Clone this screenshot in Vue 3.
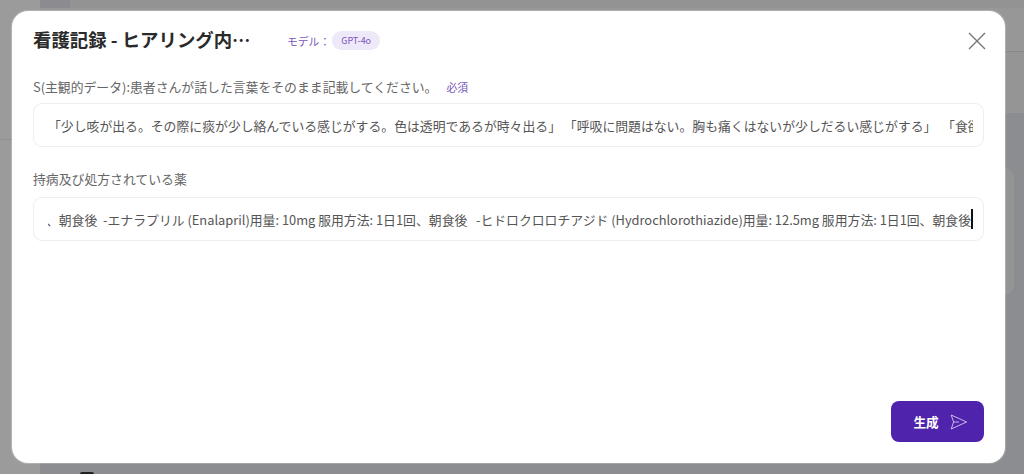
<script setup>
const texto1 = "「少し咳が出る。その際に痰が少し絡んでいる感じがする。色は透明であるが時々出る」 「呼吸に問題はない。胸も痛くはないが少しだるい感じがする」  「食欲はあります」";
const texto2 = "、朝食後  -エナラプリル (Enalapril)用量: 10mg 服用方法: 1日1回、朝食後   -ヒドロクロロチアジド (Hydrochlorothiazide)用量: 12.5mg 服用方法: 1日1回、朝食後";
</script>

<template>
  <div class="fundo">
    <aside class="lateral">
      <div class="lateral-linha"></div>
    </aside>
    <div class="principal">
      <div class="topo">
        <div class="topo-aba"><span class="aba-ativa"></span></div>
        <div class="topo-barra"></div>
      </div>
      <div class="corpo">
        <div class="cartao"></div>
      </div>
      <div class="rodape-fundo"><span class="avatar"></span></div>
    </div>
    <section class="modal">
      <header class="cabecalho">
        <h2 class="titulo">看護記録 - ヒアリング内…</h2>
        <span class="modelo">モデル：</span>
        <span class="etiqueta">GPT-4o</span>
        <svg class="fechar" width="18" height="18" viewBox="0 0 18 18">
          <path d="M1 1L17 17M17 1L1 17" stroke="#777" stroke-width="1.4" fill="none" />
        </svg>
      </header>
      <div class="campo">
        <label class="rotulo">S(主観的データ):患者さんが話した言葉をそのまま記載してください。<span class="obrigatorio">必須</span></label>
        <div class="entrada"><div class="recorte"><span class="valor">{{ texto1 }}</span></div></div>
      </div>
      <div class="campo segundo">
        <label class="rotulo">持病及び処方されている薬</label>
        <div class="entrada"><div class="recorte fim"><span class="valor">{{ texto2 }}</span><i class="cursor"></i></div></div>
      </div>
      <footer class="rodape">
        <button class="gerar">
          生成
          <svg width="18" height="16" viewBox="0 0 18 16" fill="none">
            <path d="M1.2 1L16.6 8L1.2 15L3.6 8ZM3.6 8H9" stroke="#d8caf0" stroke-width="0.9" stroke-linejoin="round" />
          </svg>
        </button>
      </footer>
    </section>
  </div>
</template>

<style>
body {
  margin: 0;
  overflow: hidden;
}
</style>

<style scoped>
.fundo {
  position: relative;
  display: flex;
  width: 1024px;
  height: 474px;
  overflow: hidden;
  background: #8c8d91;
  font-family: "Noto Sans CJK JP", "Noto Sans", sans-serif;
}

.lateral {
  width: 40px;
  flex-shrink: 0;
  background: #9b9b9b;
}

.lateral-linha {
  height: 140px;
  border-bottom: 1px solid #8f8f8f;
  box-sizing: border-box;
}

.principal {
  flex: 1;
  display: flex;
  flex-direction: column;
}

.topo {
  display: flex;
  flex-direction: column;
  height: 113px;
  flex-shrink: 0;
  background: #959595;
}

.topo-aba {
  display: flex;
  height: 8px;
  background: #939394;
}

.aba-ativa {
  width: 30px;
  background: #8c8c90;
}

.topo-barra {
  height: 43px;
  background: #979797;
  border-bottom: 1px solid #888889;
}

.corpo {
  flex: 1;
  display: flex;
  flex-direction: column;
  align-items: flex-end;
}

.cartao {
  width: 30px;
  height: 127px;
  margin: 55px 10px 0 0;
  border-radius: 10px;
  background: #949494;
}

.rodape-fundo {
  height: 2px;
  padding-left: 40px;
}

.avatar {
  display: block;
  width: 14px;
  height: 2px;
  border-radius: 7px 7px 0 0;
  background: #222;
}

.modal {
  position: absolute;
  top: 11px;
  left: 12px;
  width: 993px;
  height: 452px;
  box-sizing: border-box;
  display: flex;
  flex-direction: column;
  padding: 0 21px 21px;
  border-radius: 16px;
  background: #fff;
  box-shadow: 0 0 1px 1px rgba(255, 255, 255, 0.25);
}

.cabecalho {
  display: flex;
  align-items: center;
  height: 59px;
  flex-shrink: 0;
}

.titulo {
  margin: -3px 0 0;
  width: 254px;
  font-size: 18.4px;
  font-weight: 700;
  color: #2a2a2a;
  white-space: nowrap;
}

.modelo {
  font-size: 10.8px;
  color: #7a55bd;
}

.etiqueta {
  margin-left: 2px;
  padding: 0 9px;
  height: 19px;
  line-height: 19px;
  border-radius: 10px;
  background: #eee9f8;
  font-size: 9px;
  color: #7a55bd;
}

.fechar {
  margin-left: auto;
  margin-right: -2px;
}

.campo {
  display: flex;
  flex-direction: column;
}

.segundo {
  margin-top: 15px;
}

.rotulo {
  height: 33px;
  line-height: 33px;
  font-size: 12.85px;
  color: #666;
}

.segundo .rotulo {
  height: 35px;
}

.obrigatorio {
  margin-left: 9px;
  font-size: 10.8px;
  color: #7a55bd;
}

.entrada {
  display: flex;
  align-items: center;
  height: 44px;
  box-sizing: border-box;
  padding: 0 10px 0 14px;
  border: 1px solid #eeeeee;
  border-radius: 9px;
  font-size: 12.85px;
  color: #555;
}

.recorte {
  flex: 1;
  display: flex;
  align-items: center;
  min-width: 0;
  overflow: hidden;
  white-space: pre;
}

.fim {
  justify-content: flex-end;
}

.valor {
  flex-shrink: 0;
}

.cursor {
  flex-shrink: 0;
  width: 2px;
  height: 20px;
  background: #111;
}

.rodape {
  display: flex;
  justify-content: flex-end;
  margin-top: auto;
}

.gerar {
  display: flex;
  align-items: center;
  justify-content: center;
  gap: 11px;
  width: 93px;
  height: 41px;
  padding: 0 0 0 6px;
  border: none;
  border-radius: 8px;
  background: #4f23ac;
  color: #fff;
  font-family: inherit;
  font-size: 12.6px;
  font-weight: 700;
}
</style>
